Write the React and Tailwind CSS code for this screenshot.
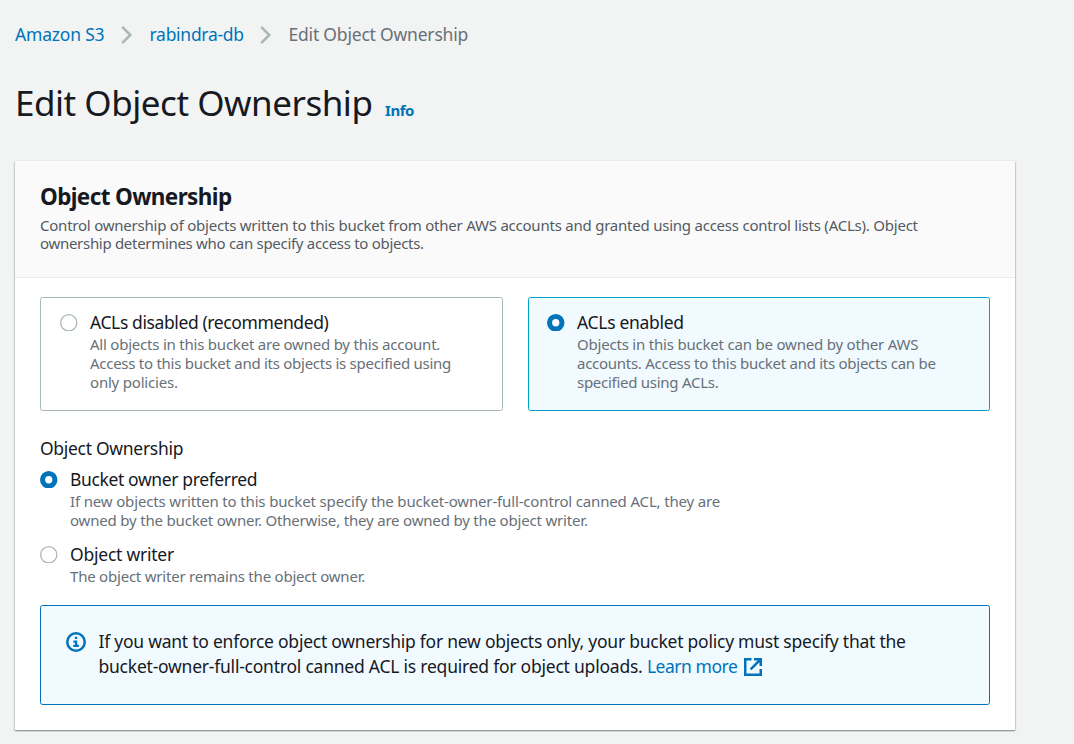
import React from "react";

function Chevron({ className }) {
  return (
    <svg className={`h-5 w-5 shrink-0 ${className}`} viewBox="0 0 20 20" fill="none" stroke="#aab7b8" strokeWidth="2.5">
      <path d="M5.2 1.9L13.3 10L5.2 18.1" />
    </svg>
  );
}

function InfoIcon() {
  return (
    <svg className="h-5 w-5 shrink-0" viewBox="0 0 16 16" fill="none" stroke="#0073bb">
      <circle cx="8" cy="8" r="7" strokeWidth="2" />
      <path strokeWidth="1.8" d="M7.1 4.7H9M6 7.6H8.2M8.1 6.8V11.6M5.8 11.1H10.3" />
    </svg>
  );
}

function ExternalIcon() {
  return (
    <svg className="ml-[7px] inline-block h-[18px] w-[18px] align-[-3px]" viewBox="0 0 18 18" fill="none" stroke="#0073bb" strokeWidth="2.5">
      <path d="M7.5 1.25H1.25V16.75H16.75V11" />
      <path d="M10 1.25H16.75V8M16.5 1.5L6.6 11.4" />
    </svg>
  );
}

function Radio({ checked }) {
  return (
    <span className="flex h-[25px] w-[17.5px] shrink-0 items-center">
      <svg className="h-[17.5px] w-[17.5px]" viewBox="0 0 17.5 17.5">
        {checked ? (
          <circle cx="8.75" cy="8.75" r="6.2" fill="#fff" stroke="#0073bb" strokeWidth="5.1" />
        ) : (
          <circle cx="8.75" cy="8.75" r="8.1" fill="#fff" stroke="#aab7b8" strokeWidth="1.3" />
        )}
      </svg>
    </span>
  );
}

function Lines({ items }) {
  return items.map(([text, tracking]) => (
    <span key={text} className={`block ${tracking}`}>{text}</span>
  ));
}

function Option({ checked, label, tracking, lines }) {
  return (
    <div className="flex gap-[12.5px]">
      <Radio checked={checked} />
      <div className="whitespace-nowrap">
        <div className={`text-[17.5px] leading-[25px] ${tracking}`}>{label}</div>
        <div className="text-[15px] leading-[18.75px] text-[#687078]">
          <Lines items={lines} />
        </div>
      </div>
    </div>
  );
}

export default function App() {
  return (
    <div className="h-[744px] w-full overflow-hidden bg-[#f2f3f3] pl-[15px] pt-[22px] font-['Noto_Sans',sans-serif] text-[17.5px] leading-[25px] text-[#16191f]">
      <nav className="flex h-[25px] items-center whitespace-nowrap">
        <a className="w-[90px] tracking-[-0.2px] text-[#0073bb]">Amazon S3</a>
        <Chevron className="ml-3 mr-[12.5px]" />
        <a className="w-[95px] tracking-[-0.28px] text-[#0073bb]">rabindra-db</a>
        <Chevron className="ml-[11px] mr-[13px]" />
        <span className="tracking-[-0.2px] text-[#687078]">Edit Object Ownership</span>
      </nav>

      <div className="mt-[33px] flex h-[45px] items-baseline whitespace-nowrap">
        <h1 className="w-[370px] text-[35px] leading-[45px] tracking-[-0.48px]">Edit Object Ownership</h1>
        <a className="text-[15px] font-bold leading-[18.75px] tracking-[-0.45px] text-[#0073bb]">Info</a>
      </div>

      <section className="mt-9 h-[569px] w-[1000px] bg-white shadow-[0_-1px_0_0_#eaeded,0_1.25px_1.25px_0_rgba(0,28,36,0.3),1.25px_1.25px_1.25px_0_rgba(0,28,36,0.15),-1.25px_1.25px_1.25px_0_rgba(0,28,36,0.15)]">
        <header className="h-[117px] border-b border-[#eaeded] bg-[#fafafa] pl-[25px] pt-[22px]">
          <h2 className="text-[22.5px] font-bold leading-[27.5px] tracking-[-0.62px]">Object Ownership</h2>
          <p className="mt-[5px] whitespace-nowrap text-[15px] leading-[18.75px] text-[#545b64]">
            <Lines
              items={[
                ["Control ownership of objects written to this bucket from other AWS accounts and granted using access control lists (ACLs). Object", "tracking-[-0.228px]"],
                ["ownership determines who can specify access to objects.", "tracking-[-0.3px]"],
              ]}
            />
          </p>
        </header>

        <div className="px-[25px] pt-[19px]">
          <div className="grid h-[114px] grid-cols-[463px_462px] gap-[25px]">
            <div className="rounded-[2.5px] border border-[#aab7b8] pl-[19px] pt-3">
              <Option
                label="ACLs disabled (recommended)"
                tracking="tracking-[-0.39px]"
                lines={[
                  ["All objects in this bucket are owned by this account.", "tracking-[-0.22px]"],
                  ["Access to this bucket and its objects is specified using", "tracking-[-0.27px]"],
                  ["only policies.", "tracking-[-0.2px]"],
                ]}
              />
            </div>
            <div className="rounded-[2.5px] border border-[#00a1c9] bg-[#f1faff] pl-[18px] pt-3">
              <Option
                checked
                label="ACLs enabled"
                tracking="tracking-[-0.3px]"
                lines={[
                  ["Objects in this bucket can be owned by other AWS", "tracking-[-0.2px]"],
                  ["accounts. Access to this bucket and its objects can be", "tracking-[-0.27px]"],
                  ["specified using ACLs.", "tracking-[-0.27px]"],
                ]}
              />
            </div>
          </div>

          <div className="mt-[25px] tracking-[-0.3px]">Object Ownership</div>
          <div className="mt-[6px] flex flex-col gap-[12.5px]">
            <Option
              checked
              label="Bucket owner preferred"
              tracking="tracking-[-0.37px]"
              lines={[
                ["If new objects written to this bucket specify the bucket-owner-full-control canned ACL, they are", "tracking-[-0.155px]"],
                ["owned by the bucket owner. Otherwise, they are owned by the object writer.", "tracking-[-0.185px]"],
              ]}
            />
            <Option
              label="Object writer"
              tracking="tracking-[-0.23px]"
              lines={[["The object writer remains the object owner.", "tracking-[-0.215px]"]]}
            />
          </div>

          <div className="mt-[19.25px] flex h-[100px] gap-[12.5px] rounded-[2.5px] border border-[#0073bb] bg-[#f1faff] pl-[25px] pt-[23.5px]">
            <span className="flex h-[25px] items-center">
              <InfoIcon />
            </span>
            <p className="-mt-[0.75px] whitespace-nowrap">
              <span className="block tracking-[-0.242px]">If you want to enforce object ownership for new objects only, your bucket policy must specify that the</span>
              <span className="tracking-[-0.228px]">bucket-owner-full-control canned ACL is required for object uploads. </span>
              <a className="tracking-[-0.47px] text-[#0073bb]">
                Learn more
                <ExternalIcon />
              </a>
            </p>
          </div>
        </div>
      </section>
    </div>
  );
}
